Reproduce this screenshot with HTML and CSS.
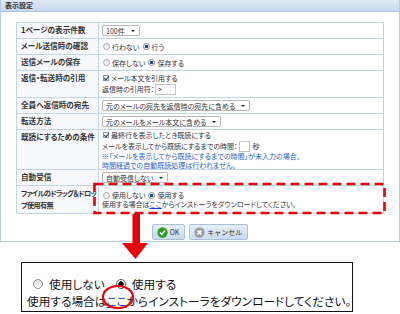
FILE: index.html
```html
<!DOCTYPE html>
<html lang="ja">
<head>
  <meta charset="UTF-8" />
  <title>表示設定</title>
  <link rel="stylesheet" href="styles.css">
</head>
<body>
  <div class="panel">
    <div class="panel-head">表示設定</div>
    <div class="settings">
      <div class="row r16">
        <div class="lbl">1ページの表示件数</div>
        <div class="val"><span class="sel">100件<i class="caret"></i></span></div>
      </div>
      <div class="row r16">
        <div class="lbl">メール送信時の確認</div>
        <div class="val"><div class="line"><span class="rd"></span>行わない<span class="rd on"></span>行う</div></div>
      </div>
      <div class="row r16">
        <div class="lbl">送信メールの保存</div>
        <div class="val"><div class="line"><span class="rd"></span>保存しない<span class="rd on"></span>保存する</div></div>
      </div>
      <div class="row r27">
        <div class="lbl">返信・転送時の引用</div>
        <div class="val">
          <div class="line"><span class="cb"></span>メール本文を引用する</div>
          <div class="line tall">返信時の引用符：<span class="inp w21">&gt;</span></div>
        </div>
      </div>
      <div class="row r16">
        <div class="lbl">全員へ返信時の宛先</div>
        <div class="val"><span class="sel">元のメールの宛先を返信時の宛先に含める<i class="caret"></i></span></div>
      </div>
      <div class="row r16">
        <div class="lbl">転送方法</div>
        <div class="val"><span class="sel">元のメールをメール本文に含める<i class="caret"></i></span></div>
      </div>
      <div class="row r40">
        <div class="lbl">既読にするための条件</div>
        <div class="val">
          <div class="line"><span class="cb"></span>最終行を表示したとき既読にする</div>
          <div class="line tall">メールを表示してから既読にするまでの時間：<span class="inp w11"></span>秒</div>
          <div class="note">※「メールを表示してから既読にするまでの時間」が未入力の場合、</div>
          <div class="note">時間経過での自動既読処理は行われません。</div>
        </div>
      </div>
      <div class="row r16">
        <div class="lbl">自動受信</div>
        <div class="val"><span class="sel">自動受信しない<i class="caret"></i></span></div>
      </div>
      <div class="row r27 last">
        <div class="lbl tight">ファイルのドラッグ＆ドロッ<br>プ使用有無</div>
        <div class="val">
          <div class="line sm"><span class="rd"></span>使用しない<span class="rd on"></span>使用する</div>
          <div class="line sm">使用する場合は<a class="link">ここ</a>からインストーラをダウンロードしてください。</div>
        </div>
      </div>
    </div>
    <div class="actions">
      <button class="btn" type="button">
        <svg class="ico" viewBox="0 0 12 12"><circle cx="6" cy="6" r="5.6" fill="#2f9a1e"/><path d="M3.2 6.2 L5.2 8.1 L8.9 3.9" fill="none" stroke="#fff" stroke-width="1.7"/></svg>OK
      </button>
      <button class="btn" type="button">
        <svg class="ico" viewBox="0 0 12 12"><circle cx="6" cy="6" r="5.6" fill="#9a9ea4"/><path d="M3.9 3.9 L8.1 8.1 M8.1 3.9 L3.9 8.1" stroke="#fff" stroke-width="1.7"/></svg>キャンセル
      </button>
    </div>
  </div>

  <div class="callout">
    <div class="c-line first"><span class="crd"></span>使用しない<span class="crd on"></span>使用する</div>
    <div class="c-line">使用する場合は<a class="c-link">ここ</a>からインストーラをダウンロードしてください。</div>
  </div>

  <svg class="marks" width="400" height="314" viewBox="0 0 400 314">
    <rect x="94.5" y="184" width="290" height="29" fill="none" stroke="#e8000b" stroke-width="2.6" stroke-dasharray="9 5"/>
    <rect x="132.5" y="214" width="7.5" height="30" fill="#e8000b"/>
    <polygon points="122,243 148,243 135.5,259" fill="#e8000b"/>
    <ellipse cx="118" cy="297" rx="15" ry="11" fill="none" stroke="#e8000b" stroke-width="2.2"/>
  </svg>
</body>
</html>
```

FILE: styles.css
```css
body {
  margin: 0;
  width: 400px;
  height: 314px;
  overflow: hidden;
  position: relative;
  background: #fff;
  color: #222;
  font-family: "Noto Sans CJK JP", "Noto Sans", sans-serif;
  font-feature-settings: "palt";
}
.panel {
  height: 242px;
  box-sizing: border-box;
  border: 1px solid #b9cbe0;
  border-top: 0;
}
.panel-head {
  height: 11px;
  border-bottom: 1px solid #b3c7e0;
  background: linear-gradient(#dfe9f6, #c7d8ee);
  font-size: 7px;
  font-weight: bold;
  line-height: 11px;
  padding-left: 4px;
  color: #333;
}
.settings {
  margin: 10px 0 0 15px;
  width: 368px;
  box-sizing: border-box;
  border: 1px solid #c2d4ea;
  font-size: 7px;
}
.row {
  display: grid;
  grid-template-columns: 82px 1fr;
  box-sizing: border-box;
  border-bottom: 1px solid #c2d4ea;
}
.row.last { border-bottom: 0; }
.r16 { height: 16px; }
.r27 { height: 27px; }
.r40 { height: 40px; }
.lbl {
  background: #f7f9fc;
  border-right: 1px solid #c2d4ea;
  font-size: 7.6px;
  font-weight: bold;
  line-height: 12px;
  padding: 1px 1px 0 4px;
  color: #333;
  white-space: nowrap;
}
.lbl.tight {
  font-size: 7.2px;
  letter-spacing: -0.7px;
}
.val {
  display: flex;
  flex-direction: column;
  justify-content: center;
  align-items: flex-start;
  padding-left: 3px;
  color: #333;
}
.line {
  display: flex;
  align-items: center;
  height: 10px;
  line-height: 10px;
  white-space: nowrap;
}
.line.tall { height: 12px; }
.line.sm { height: 8.5px; line-height: 8.5px; }
.note {
  color: #2a5fc8;
  line-height: 8.5px;
  white-space: nowrap;
}
.sel {
  display: inline-flex;
  align-items: center;
  height: 11px;
  box-sizing: border-box;
  padding: 0 4px 0 3px;
  border: 1px solid #b8b8b8;
  border-radius: 2px;
  background: #fff;
  white-space: nowrap;
}
.caret {
  margin-left: 6px;
  border-left: 2px solid transparent;
  border-right: 2px solid transparent;
  border-top: 2px solid #222;
}
.rd {
  width: 5px;
  height: 5px;
  border-radius: 50%;
  border: 1px solid #9aa4b0;
  background: linear-gradient(#e4e6e9, #fff);
  margin: 0 2px 0 1px;
}
.rd.on {
  margin-left: 3px;
  background: radial-gradient(circle, #234a8c 0 1.6px, #fff 2px);
  border-color: #6d85a8;
}
.cb {
  width: 6px;
  height: 6px;
  box-sizing: border-box;
  border: 1px solid #8d9cb0;
  background: #eef2f7;
  margin: 0 2px 0 1px;
  position: relative;
}
.cb::after {
  content: "";
  position: absolute;
  left: 1px;
  top: -1px;
  width: 2px;
  height: 4px;
  border-right: 1px solid #243c70;
  border-bottom: 1px solid #243c70;
  transform: rotate(40deg);
}
.inp {
  display: inline-block;
  height: 11px;
  box-sizing: border-box;
  border: 1px solid #c4c4c4;
  background: #fff;
  line-height: 9px;
  padding-left: 2px;
  margin: 0 3px 0 1px;
}
.w21 { width: 21px; }
.w11 { width: 11px; }
.link {
  color: #1a3fd0;
  text-decoration: underline;
}
.actions {
  display: flex;
  justify-content: center;
  gap: 4px;
  margin-top: 10px;
}
.btn {
  display: flex;
  align-items: center;
  gap: 2px;
  height: 16px;
  padding: 0 5px 0 4px;
  border: 1px solid #a9c0dc;
  border-radius: 2px;
  background: linear-gradient(#e6eef8, #c9dbf0);
  font-family: inherit;
  font-size: 7px;
  color: #333;
}
.btn .ico {
  width: 11px;
  height: 11px;
}
.callout {
  margin: 20px 0 0 21px;
  width: 332px;
  height: 50px;
  box-sizing: border-box;
  border: 1px solid #111;
  padding: 13px 0 0 5px;
  font-size: 11.7px;
  color: #111;
}
.c-line {
  display: flex;
  align-items: center;
  height: 16.5px;
  line-height: 16.5px;
  white-space: nowrap;
}
.c-line.first { padding-left: 6px; }
.crd {
  width: 8px;
  height: 8px;
  border-radius: 50%;
  border: 1px solid #888;
  background: linear-gradient(#dcdcdc, #fff);
  margin-right: 6px;
}
.crd.on {
  margin-left: 11px;
  border-color: #555;
  background: radial-gradient(circle, #000 0 2.4px, #fff 3px);
}
.c-link {
  color: #1a3fd0;
  text-decoration: underline;
}
.marks {
  position: absolute;
  left: 0;
  top: 0;
  pointer-events: none;
}
```
